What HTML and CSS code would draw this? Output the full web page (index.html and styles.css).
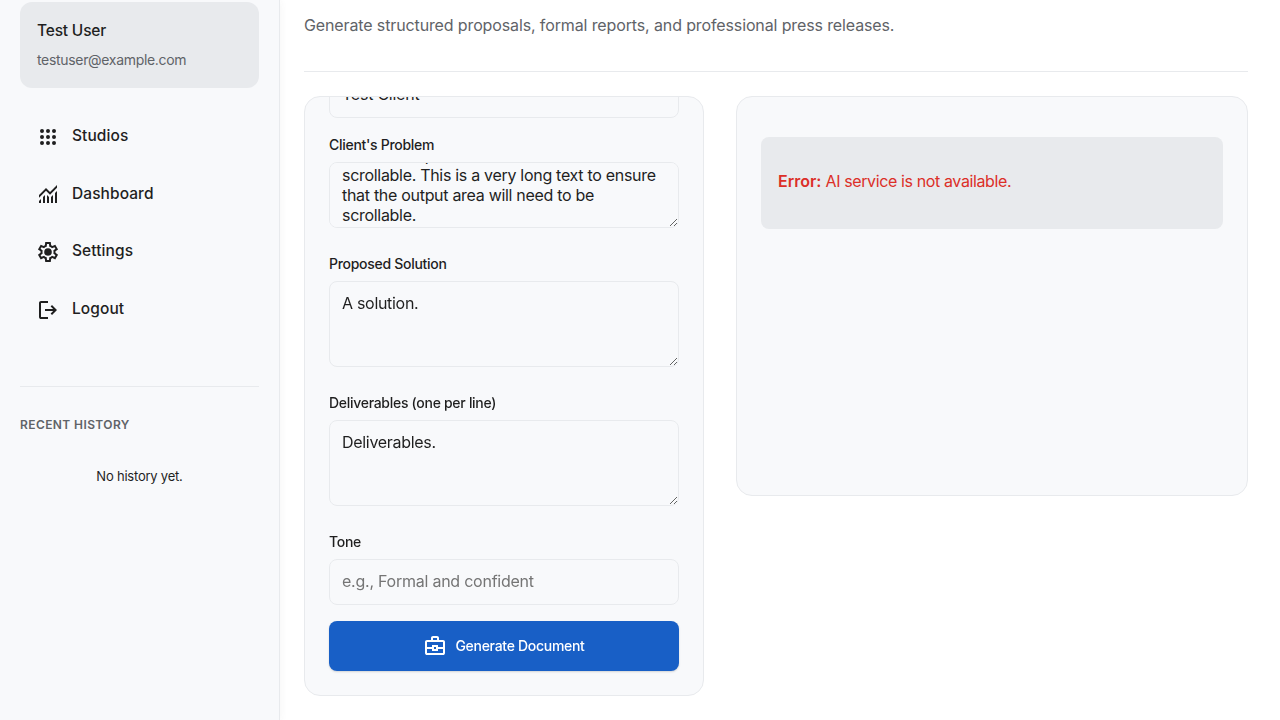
FILE: index.html
```html
<!DOCTYPE html>
<html lang="en">
<head>
<meta charset="utf-8">
<title>Document Studio</title>
<link rel="stylesheet" href="styles.css">
</head>
<body>
<div class="app">
  <aside class="sidebar">
    <div class="user">
      <div class="user-name"><span>Test User</span></div>
      <div class="user-mail"><span>testuser@example.com</span></div>
    </div>
    <nav class="nav">
      <a class="nav-item"><svg class="icon" viewBox="0 0 24 24"><path d="M4 6a2 2 0 1 0 4 0a2 2 0 1 0-4 0M10 6a2 2 0 1 0 4 0a2 2 0 1 0-4 0M16 6a2 2 0 1 0 4 0a2 2 0 1 0-4 0M4 12a2 2 0 1 0 4 0a2 2 0 1 0-4 0M10 12a2 2 0 1 0 4 0a2 2 0 1 0-4 0M16 12a2 2 0 1 0 4 0a2 2 0 1 0-4 0M4 18a2 2 0 1 0 4 0a2 2 0 1 0-4 0M10 18a2 2 0 1 0 4 0a2 2 0 1 0-4 0M16 18a2 2 0 1 0 4 0a2 2 0 1 0-4 0"/></svg><span>Studios</span></a>
      <a class="nav-item"><svg class="icon" viewBox="0 0 24 24"><path d="M3 21v-2l2-2v4H3Zm4 0v-6l2-2v8H7Zm4 0v-8l2 2.03V21h-2Zm4 0v-5.98l2-2V21h-2Zm4 0V11l2-2v12h-2ZM3 15.83V13l7-7 4 4 7-7v2.83l-7 7-4-4-7 7Z"/></svg><span>Dashboard</span></a>
      <a class="nav-item"><svg class="icon" viewBox="0 0 24 24"><path fill-rule="evenodd" d="m9.25 22-.4-3.2q-.33-.13-.61-.3t-.56-.38L4.7 19.38l-2.75-4.75 2.58-1.95q-.03-.18-.03-.34v-.67q0-.16.03-.34L1.95 9.38 4.7 4.63l2.98 1.25q.27-.2.57-.38t.6-.3l.4-3.2h5.5l.4 3.2q.33.13.61.3t.56.38l2.98-1.25 2.75 4.75-2.58 1.95q.03.18.03.34v.67q0 .16-.05.34l2.58 1.95-2.75 4.75-2.96-1.26q-.27.2-.57.38t-.6.3l-.4 3.2h-5.5ZM11 20h1.98l.35-2.65q.77-.2 1.44-.59t1.21-.94l2.48 1.03.97-1.7-2.15-1.63q.13-.35.18-.74T17.5 12t-.05-.79-.18-.74l2.15-1.63-.97-1.7-2.48 1.05q-.54-.58-1.21-.96t-1.44-.59L13 4h-1.98l-.35 2.65q-.77.2-1.44.59t-1.21.94L5.55 7.15l-.98 1.7 2.15 1.6q-.12.38-.17.75t-.05.8q0 .4.05.78t.17.75l-2.15 1.62.98 1.7 2.47-1.05q.54.58 1.21.96t1.44.59L11 20Z"/><circle cx="12" cy="12" r="3.8"/></svg><span>Settings</span></a>
      <a class="nav-item"><svg class="icon" viewBox="0 0 24 24"><path d="M5 21q-.83 0-1.41-.59T3 19V5q0-.83.59-1.41T5 3h7v2H5v14h7v2H5Zm11-4-1.38-1.45L17.18 13H9v-2h8.18l-2.56-2.55L16 7l5 5-5 5Z"/></svg><span>Logout</span></a>
    </nav>
    <div class="history">
      <div class="history-title"><span>RECENT HISTORY</span></div>
      <div class="history-empty"><span>No history yet.</span></div>
    </div>
  </aside>
  <main class="main">
    <header class="intro"><span>Generate structured proposals, formal reports, and professional press releases.</span></header>
    <div class="columns">
      <section class="card form">
        <input class="field" value="Test Client">
        <label><span>Client's Problem</span></label>
        <textarea class="field short" id="problem">This is a very long text to ensure
that the output area will need to be
scrollable. This is a very long text to ensure
that the output area will need to be
scrollable.</textarea>
        <label><span>Proposed Solution</span></label>
        <textarea class="field">A solution.</textarea>
        <label><span>Deliverables (one per line)</span></label>
        <textarea class="field">Deliverables.</textarea>
        <label><span>Tone</span></label>
        <input class="field" placeholder="e.g., Formal and confident">
        <button class="submit"><svg class="icon" viewBox="0 0 24 24"><path fill-rule="evenodd" d="M4 21q-.83 0-1.41-.59T2 19V8q0-.83.59-1.41T4 6h4V4q0-.83.59-1.41T10 2h4q.83 0 1.41.59T16 4v2h4q.83 0 1.41.59T22 8v11q0 .83-.59 1.41T20 21H4ZM10 6h4V4h-4v2Zm10 9h-5v2H9v-2H4v4h16v-4Zm-9 0h2v-2h-2v2Zm-7-2h5v-2h6v2h5V8H4v5Z"/></svg><span>Generate Document</span></button>
      </section>
      <section class="card output">
        <div class="error"><span><b>Error:</b> AI service is not available.</span></div>
      </section>
    </div>
  </main>
</div>
<script src="main.js"></script>
</body>
</html>
```
FILE: styles.css
```css
* { box-sizing: border-box; }
body { margin: 0; background: #fff; color: #1f1f1f; font: 16px/24px Inter, "Liberation Sans", sans-serif; }
.app { display: flex; height: 720px; overflow: hidden; }
.sidebar { flex: 0 0 280px; padding: 2px 20px; background: #f8f9fb; border-right: 1px solid #e8eaed; box-shadow: 0 1px 8px rgba(60,64,67,.06); }
.user { height: 86px; padding: 17px; border-radius: 12px; background: #e8eaed; white-space: nowrap; }
.user-name { font-size: 15.5px; line-height: 24px; font-weight: 500; letter-spacing: -.18px; }
.user-mail { margin-top: 6px; font-size: 14px; line-height: 22px; color: #5f6368; letter-spacing: -.32px; }
.nav { display: flex; flex-direction: column; gap: 8px; padding-top: 24px; }
.nav-item { display: flex; align-items: center; gap: 12px; height: 49.6px; padding-left: 16px; font-size: 15.5px; font-weight: 500; letter-spacing: .08px; }
.nav-item span { padding-bottom: 1px; }
.icon { flex: none; width: 24px; height: 24px; fill: currentColor; }
.history { margin-top: 52px; border-top: 1px solid #e8eaed; padding-top: 28px; }
.history-title { font-size: 12px; line-height: 20px; font-weight: 600; letter-spacing: .4px; color: #5f6368; }
.history-empty { margin-top: 30px; font-size: 13px; line-height: 22px; text-align: center; letter-spacing: -.22px; }
.main { flex: 1; padding: 0 32px 0 24px; }
.intro { height: 72px; padding-top: 13px; border-bottom: 1px solid #e8eaed; color: #5f6368; letter-spacing: -.125px; white-space: nowrap; }
.columns { display: flex; align-items: flex-start; gap: 32px; padding-top: 24px; }
.card { border: 1px solid #e8eaed; border-radius: 16px; background: #f8f9fb; }
.form { display: flex; flex-direction: column; justify-content: flex-end; flex: 0 0 400px; height: 600px; padding: 0 24px 24px; overflow: hidden; }
.output { flex: 1; height: 400px; padding: 40px 24px; }
label { margin-bottom: 6px; font-size: 14px; line-height: 22px; font-weight: 500; letter-spacing: -.29px; }
.field { flex: none; width: 100%; height: 46px; margin: 0 0 16px; padding: 11px 12px 13px; border: 1px solid #e8eaed; border-radius: 8px; background: #f8f9fb; color: #1f1f1f; font: 16px/20px Inter, "Liberation Sans", sans-serif; letter-spacing: -.3px; }
input.field { letter-spacing: -.24px; }
textarea.field { height: 86px; margin-bottom: 25px; resize: vertical; }
textarea.short { height: 66px; white-space: pre; overflow-x: hidden; }
.field::placeholder { color: #757575; }
.submit { display: flex; flex: none; align-items: center; justify-content: center; gap: 8px; height: 50px; padding: 0; border: 0; border-radius: 8px; background: #185fc6; color: #fff; font: 500 14px/22px Inter, "Liberation Sans", sans-serif; letter-spacing: -.29px; box-shadow: 0 1px 2px rgba(60,64,67,.2); }
.error { height: 92px; padding: 32px 17px; border-radius: 8px; background: #e8eaed; color: #dc2f28; letter-spacing: -.38px; }
.error b { font-weight: 600; letter-spacing: 0; }
```
FILE: main.js
```js
document.getElementById('problem').scrollTop = 49;
```
